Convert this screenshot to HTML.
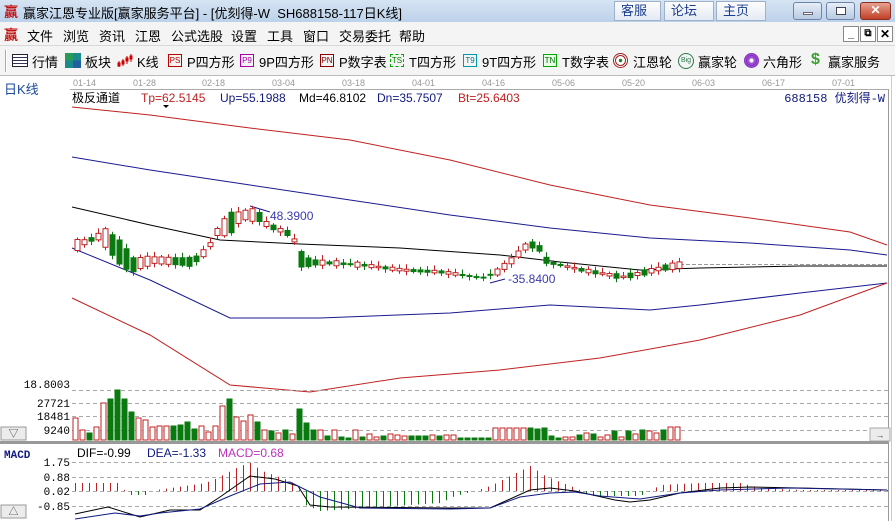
<!DOCTYPE html>
<html><head><meta charset="utf-8">
<style>
*{margin:0;padding:0;box-sizing:border-box}
body{width:895px;height:521px;overflow:hidden;background:#fff;font-family:"Liberation Sans","Noto Sans CJK SC",sans-serif;position:relative}
.abs{position:absolute;white-space:nowrap}
#title{left:0;top:0;width:895px;height:22px;background:linear-gradient(#d6e4f3,#bcd1ea);}
#menu{left:0;top:22px;width:895px;height:24px;background:#f4f4f4;border-bottom:1px solid #d8d8d8}
#tool{left:0;top:46px;width:895px;height:30px;background:#f4f4f4;border-bottom:1px solid #bbb}
.t{font-size:13px;color:#000}
.btn{position:absolute;top:1px;height:20px;background:linear-gradient(#fdfdfd,#e4ebf4);border:1px solid #9fb1c8;color:#1a3d8f;font-size:13px;line-height:18px;padding-left:6px}
.wc{position:absolute;top:2px;height:18px;width:29px;border:1px solid #6d84a8;border-radius:3px;background:linear-gradient(#e6eef8,#b8cae2)}
.ico{position:absolute;top:54px;width:14px;height:13px;font-size:8px;line-height:11px;text-align:center;border:1px solid;font-family:"Liberation Sans",sans-serif}
</style></head><body>
<div id="title" class="abs">
 <span class="abs" style="left:4px;top:2px;color:#c01010;font-size:14px;font-weight:bold">赢</span>
 <span class="abs t" style="left:23px;top:3px">赢家江恩专业版[赢家服务平台] - [优刻得-W&nbsp;&nbsp;SH688158-117日K线]</span>
 <div class="btn" style="left:614px;width:47px">客服</div>
 <div class="btn" style="left:664px;width:50px">论坛</div>
 <div class="btn" style="left:716px;width:50px">主页</div>
 <div class="wc" style="left:793px"><div style="position:absolute;left:9px;top:9px;width:10px;height:3px;background:#fff;border:1px solid #667"></div></div>
 <div class="wc" style="left:826px"><div style="position:absolute;left:9px;top:4px;width:10px;height:8px;border:1px solid #445;background:#fff"></div></div>
 <div class="wc" style="left:860px;width:31px;background:linear-gradient(#e8a090,#c04028);border-color:#8a3020;color:#fff;font-size:12px;font-weight:bold;text-align:center;line-height:15px">✕</div>
</div>
<div id="menu" class="abs">
 <span class="abs" style="left:4px;top:3px;color:#c01010;font-size:14px;font-weight:bold">赢</span>
 <span class="abs t" style="left:27px;top:4px">文件</span>
 <span class="abs t" style="left:63px;top:4px">浏览</span>
 <span class="abs t" style="left:99px;top:4px">资讯</span>
 <span class="abs t" style="left:135px;top:4px">江恩</span>
 <span class="abs t" style="left:171px;top:4px">公式选股</span>
 <span class="abs t" style="left:231px;top:4px">设置</span>
 <span class="abs t" style="left:267px;top:4px">工具</span>
 <span class="abs t" style="left:303px;top:4px">窗口</span>
 <span class="abs t" style="left:339px;top:4px">交易委托</span>
 <span class="abs t" style="left:399px;top:4px">帮助</span>
 <div class="abs" style="left:843px;top:4px;width:16px;height:16px;border:1px solid #888;background:#fff;font-size:11px;font-weight:bold;text-align:center;line-height:14px">_</div>
 <div class="abs" style="left:860px;top:4px;width:16px;height:16px;border:1px solid #888;background:#fff;font-size:10px;font-weight:bold;text-align:center;line-height:14px">⧉</div>
 <div class="abs" style="left:877px;top:4px;width:16px;height:16px;border:1px solid #888;background:#fff;font-size:12px;font-weight:bold;text-align:center;line-height:14px">✕</div>
</div>
<div id="tool" class="abs"><div class="abs" style="left:5px;top:4px;width:2px;height:22px;border-left:1px solid #aaa;border-right:1px solid #fff"></div></div>
<div class="abs" style="left:12px;top:54px;width:16px;height:13px;border:1px solid #223;background:repeating-linear-gradient(#fff 0 2px,#335 2px 3px)"></div>
<span class="abs t" style="left:32px;top:52px">行情</span>
<div class="abs" style="left:65px;top:53px;width:16px;height:15px;background:conic-gradient(#1a8a8a 0 25%,#2060a0 0 50%,#1a8a8a 0 75%,#2a9a5a 0)"></div>
<span class="abs t" style="left:85px;top:52px">板块</span>
<svg class="abs" style="left:117px;top:53px" width="17" height="15"><g stroke="#c00" fill="#c00"><line x1="2" y1="8" x2="2" y2="14"/><rect x="1" y="10" width="2" height="3"/><line x1="6" y1="6" x2="6" y2="13"/><rect x="5" y="8" width="2" height="3"/><line x1="10" y1="3" x2="10" y2="11"/><rect x="9" y="5" width="2" height="3"/><line x1="14" y1="1" x2="14" y2="9"/><rect x="13" y="3" width="2" height="3"/></g></svg>
<span class="abs t" style="left:137px;top:52px">K线</span>
<div class="ico" style="left:168px;border-color:#b00;color:#b00">PS</div><span class="abs t" style="left:187px;top:52px">P四方形</span>
<div class="ico" style="left:240px;border-color:#a0a;color:#a0a">P9</div><span class="abs t" style="left:259px;top:52px">9P四方形</span>
<div class="ico" style="left:320px;border-color:#800;color:#800">PN</div><span class="abs t" style="left:339px;top:52px">P数字表</span>
<div class="ico" style="left:390px;border-color:#0a0;color:#070;border-style:dashed">TS</div><span class="abs t" style="left:409px;top:52px">T四方形</span>
<div class="ico" style="left:463px;border-color:#09a;color:#078">T9</div><span class="abs t" style="left:482px;top:52px">9T四方形</span>
<div class="ico" style="left:543px;border-color:#0a0;color:#060;background:#e8ffe8">TN</div><span class="abs t" style="left:562px;top:52px">T数字表</span>
<div class="abs" style="left:613px;top:53px;width:15px;height:15px;border-radius:50%;border:3px double #a02020;background:radial-gradient(#2a7a2a 25%,#fff 30%)"></div><span class="abs t" style="left:633px;top:52px">江恩轮</span>
<div class="abs" style="left:678px;top:53px;width:16px;height:16px;border-radius:50%;border:1px solid #2a7a4a;color:#2a7a4a;font-size:7px;text-align:center;line-height:14px">Big</div><span class="abs t" style="left:698px;top:52px">赢家轮</span>
<div class="abs" style="left:744px;top:53px;width:15px;height:15px;border-radius:50%;border:3px double #8030c0;background:radial-gradient(#fff 30%,#a050d0 35%)"></div><span class="abs t" style="left:763px;top:52px">六角形</span>
<span class="abs" style="left:811px;top:51px;color:#3aa030;font-size:16px;font-weight:bold">$</span><span class="abs t" style="left:828px;top:52px">赢家服务</span>

<svg class="abs" style="left:0;top:76px" width="895" height="445" viewBox="0 76 895 445" font-family="Liberation Sans, Noto Sans CJK SC, sans-serif">
<g font-size="9" fill="#999">
<text x="73" y="86">01-14</text><text x="133" y="86">01-28</text><text x="202" y="86">02-18</text><text x="272" y="86">03-04</text><text x="342" y="86">03-18</text><text x="412" y="86">04-01</text><text x="482" y="86">04-16</text><text x="552" y="86">05-06</text><text x="622" y="86">05-20</text><text x="692" y="86">06-03</text><text x="762" y="86">06-17</text><text x="832" y="86">07-01</text>
</g>
<line x1="70" y1="89.5" x2="888" y2="89.5" stroke="#aaa"/>
<line x1="888.5" y1="89" x2="888.5" y2="521" stroke="#999"/>
<line x1="891.5" y1="76" x2="891.5" y2="521" stroke="#ccc"/>
<text x="4" y="94" font-size="13" fill="#1a4aa0">日K线</text>
<g font-size="12">
<text x="72" y="102" fill="#000">极反通道</text>
<text x="141" y="102" fill="#c02020">Tp=62.5145</text>
<text x="220" y="102" fill="#101a80">Up=55.1988</text>
<text x="299" y="102" fill="#000">Md=46.8102</text>
<text x="377" y="102" fill="#101a80">Dn=35.7507</text>
<text x="458" y="102" fill="#c02020">Bt=25.6403</text>
<text x="885" y="102" fill="#101a80" text-anchor="end" font-family="Liberation Mono, Noto Sans CJK SC, monospace">688158 优刻得-W</text>
</g>
<path d="M163 105h6l-3 3z" fill="#000"/>
<g fill="none" stroke-width="1">
<polyline stroke="#c02020" points="72,107 150,115 250,128 350,140 450,160 550,185 650,205 750,218 850,232 887,245"/>
<polyline stroke="#1a1a90" points="72,157 150,170 250,185 350,200 450,215 550,228 650,238 750,243 850,250 887,255"/>
<polyline stroke="#000" points="72,207 150,225 220,240 300,244 400,248 500,255 560,262 640,270 700,268 800,266 887,266"/>
<polyline stroke="#1a1a90" points="72,248 150,280 230,318 320,318 450,313 550,305 650,310 700,305 800,293 887,283"/>
<polyline stroke="#c02020" points="72,298 150,335 230,385 310,392 400,378 500,370 600,358 700,340 800,315 887,283"/>
<line x1="680" y1="264.5" x2="887" y2="264.5" stroke="#999" stroke-dasharray="4,2"/>
<polyline stroke="#1a1a90" points="250,206 270,212"/>
<polyline stroke="#1a1a90" points="490,283 505,279"/>
</g>
<text x="270" y="220" font-size="12" fill="#3a3ab0">48.3900</text>
<text x="508" y="283" font-size="12" fill="#3a3ab0">-35.8400</text>
<g id="candles"></g>
<text x="70" y="388" font-size="11" fill="#000" text-anchor="end" font-family="Liberation Mono, monospace">18.8003</text>
<g stroke="#aaa" stroke-dasharray="4,3">
<line x1="72" y1="390.5" x2="888" y2="390.5"/><line x1="72" y1="403.5" x2="888" y2="403.5"/><line x1="72" y1="416.5" x2="888" y2="416.5"/><line x1="72" y1="430.5" x2="888" y2="430.5"/>
<line x1="72" y1="462.5" x2="888" y2="462.5"/><line x1="72" y1="477.5" x2="888" y2="477.5"/><line x1="72" y1="491.5" x2="888" y2="491.5"/><line x1="72" y1="506.5" x2="888" y2="506.5"/>
</g>
<g font-size="11" fill="#000" text-anchor="end" font-family="Liberation Mono, monospace">
<text x="70" y="407">27721</text><text x="70" y="420">18481</text><text x="70" y="434">9240</text>
<text x="70" y="466">1.75</text><text x="70" y="481">0.88</text><text x="70" y="495">0.02</text><text x="70" y="510">-0.85</text>
</g>
<g id="vol"></g>
<rect x="1" y="427" width="25" height="13" fill="#ececec" stroke="#999"/>
<text x="13.5" y="437" font-size="10" text-anchor="middle" fill="#444">▽</text>
<rect x="870" y="428" width="20" height="13" fill="#ececec" stroke="#aaa"/>
<text x="880" y="438" font-size="9" text-anchor="middle" fill="#444">→</text>
<rect x="0" y="441" width="888" height="3" fill="#999"/>
<text x="4" y="458" font-size="11" fill="#101a80" font-family="Liberation Mono, monospace" font-weight="bold">MACD</text>
<g font-size="12"><text x="77" y="457" fill="#000">DIF=-0.99</text><text x="147" y="457" fill="#101a80">DEA=-1.33</text><text x="218" y="457" fill="#c030c0">MACD=0.68</text></g>
<g id="hist"></g>
<polyline fill="none" stroke="#000" points="75,514 108,507 140,517 170,510 200,510 220,497 250,476 275,479 298,486 310,505 330,507 450,508 490,508 530,490 550,488 575,491 615,500 630,502 650,500 680,493 720,488 750,487 800,488 887,490"/>
<polyline fill="none" stroke="#101a80" points="75,519 115,513 140,516 160,513 200,509 230,496 260,484 290,482 320,497 360,508 450,509 490,508 520,497 550,493 575,492 600,496 640,499 680,493 720,490 790,488 887,490"/>
<rect x="1" y="505" width="25" height="13" fill="#ececec" stroke="#999"/>
<text x="13.5" y="515" font-size="10" text-anchor="middle" fill="#444">△</text>
</svg>
<script>
(function(){
var NS="http://www.w3.org/2000/svg";
function el(p,t,a){var e=document.createElementNS(NS,t);for(var k in a)e.setAttribute(k,a[k]);document.getElementById(p).appendChild(e);}
var kp=[[75,245],[100,235],[130,265],[150,260],[190,262],[205,250],[215,232],[240,215],[255,215],[265,225],[290,235],[300,262],[330,263],[360,265],[400,270],[440,272],[480,278],[495,272],[510,260],[525,245],[535,245],[545,262],[580,270],[620,277],[640,273],[660,268],[678,265]];
function iy(x){for(var i=1;i<kp.length;i++)if(x<=kp[i][0]){var a=kp[i-1],b=kp[i];return a[1]+(b[1]-a[1])*(x-a[0])/(b[0]-a[0]);}return kp[kp.length-1][1];}
var v=[418,430,433,427,403,399,390,399,412,418,420,427,426,426,426,425,422,429,426,432,426,406,399,417,421,415,422,430,431,433,430,434,409,423,430,430,436,430,437,438,430,437,434,437,436,434,435,436,436,436,436,435,436,435,435,438,438,438,438,438,428,428,428,428,428,428,429,428,436,438,437,437,435,433,434,437,435,431,437,431,434,430,431,433,430,427,427];
var g=[0,0,1,0,0,1,1,1,1,0,0,0,0,0,1,1,1,1,0,0,0,0,1,0,0,0,1,0,1,0,1,0,1,1,1,0,1,0,1,1,0,1,0,0,1,0,0,0,1,1,1,0,1,0,0,1,1,1,1,1,0,0,0,0,0,1,1,1,1,1,0,0,1,0,1,0,0,1,0,1,0,1,0,0,1,0,0];
var N=87;
for(var i=0;i<N;i++){var x=75+i*7,c=iy(x),h=Math.max(1,Math.min(24,(440-v[i])*0.5));
 var down=g[i],ty=down?c-h/2:c-h/2,col=down?"#0a7a10":"#c02020";
 el("candles","line",{x1:x+2.5,x2:x+2.5,y1:ty-2-(i%4),y2:ty+h+2+(i%3),stroke:col});
 el("candles","rect",{x:x,y:ty,width:5,height:h,fill:down?col:"#fff",stroke:col});}
for(var i=0;i<N;i++){var x=73+i*7,c=g[i]?"#0a7a10":"#c02020";el("vol","rect",{x:x,y:v[i],width:5,height:440-v[i],fill:g[i]?c:"#fff",stroke:c});}
var hp=[[75,-8],[118,-8],[125,0],[128,4],[145,4],[150,0],[170,-3],[205,-8],[215,-12],[240,-25],[250,-28],[262,-20],[290,-10],[298,-4],[305,14],[320,20],[440,12],[455,5],[475,0],[490,-5],[530,-25],[545,-15],[575,-3],[582,0],[590,5],[640,5],[650,0],[660,-6],[700,-8],[740,-8],[760,-3],[800,-1],[887,-1]];
function ih(x){for(var i=1;i<hp.length;i++)if(x<=hp[i][0]){var a=hp[i-1],b=hp[i];return a[1]+(b[1]-a[1])*(x-a[0])/(b[0]-a[0]);}return 0;}
for(var x=75;x<=887;x+=7){var h=ih(x);if(Math.abs(h)<0.5)continue;el("hist","line",{x1:x+.5,x2:x+.5,y1:491,y2:491+h,stroke:h<0?"#c02020":"#0a7a10"});}
})();
</script>
</body></html>
